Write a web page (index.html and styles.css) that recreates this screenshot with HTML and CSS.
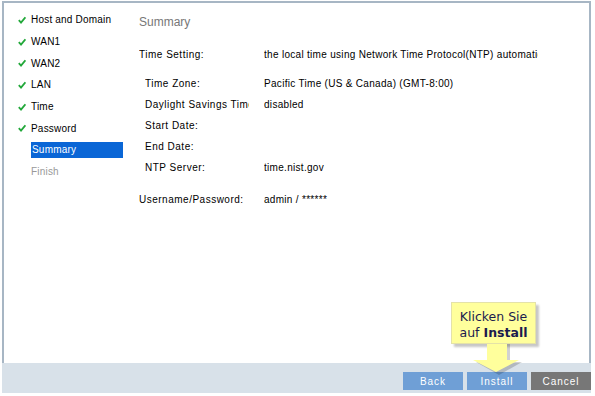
FILE: index.html
```html
<!DOCTYPE html>
<html lang="de">
<head>
    <meta charset="UTF-8">
    <link rel="stylesheet" href="styles.css">
</head>
<body>
    <div class="page">
        <div class="wizard">
            <ul class="steps">
                <li class="done"><svg viewBox="0 0 8 8"><path d="M0.8 4.2 L3 6.6 L7.4 1.2"/></svg>Host and Domain</li>
                <li class="done"><svg viewBox="0 0 8 8"><path d="M0.8 4.2 L3 6.6 L7.4 1.2"/></svg>WAN1</li>
                <li class="done"><svg viewBox="0 0 8 8"><path d="M0.8 4.2 L3 6.6 L7.4 1.2"/></svg>WAN2</li>
                <li class="done"><svg viewBox="0 0 8 8"><path d="M0.8 4.2 L3 6.6 L7.4 1.2"/></svg>LAN</li>
                <li class="done"><svg viewBox="0 0 8 8"><path d="M0.8 4.2 L3 6.6 L7.4 1.2"/></svg>Time</li>
                <li class="done"><svg viewBox="0 0 8 8"><path d="M0.8 4.2 L3 6.6 L7.4 1.2"/></svg>Password</li>
                <li class="current"><span>Summary</span></li>
                <li class="todo">Finish</li>
            </ul>
            <div class="content">
                <h2>Summary</h2>
                <div class="row">
                    <span class="label">Time Setting:</span>
                    <span class="value">the local time using Network Time Protocol(NTP) automatically</span>
                </div>
                <div class="group">
                    <div class="row sub">
                        <span class="label">Time Zone:</span>
                        <span class="value">Pacific Time (US &amp; Canada) (GMT-8:00)</span>
                    </div>
                    <div class="row sub">
                        <span class="label">Daylight Savings Time:</span>
                        <span class="value">disabled</span>
                    </div>
                    <div class="row sub">
                        <span class="label">Start Date:</span>
                        <span class="value"></span>
                    </div>
                    <div class="row sub">
                        <span class="label">End Date:</span>
                        <span class="value"></span>
                    </div>
                    <div class="row sub">
                        <span class="label">NTP Server:</span>
                        <span class="value">time.nist.gov</span>
                    </div>
                </div>
                <div class="row">
                    <span class="label">Username/Password:</span>
                    <span class="value">admin / ******</span>
                </div>
            </div>
        </div>
        <div class="footer">
            <button class="btn">Back</button>
            <button class="btn">Install</button>
            <button class="btn cancel">Cancel</button>
        </div>

        <div class="callout">
            <div class="tip-box">Klicken Sie<br>auf <b>Install</b></div>
            <svg class="tip-arrow" viewBox="0 0 52 32" width="52" height="32">
                <polygon class="shade" points="18,0 38,0 38,18 50,18 27,31 4,18 18,18"/>
                <polygon class="arrow" points="15,0 35,0 35,16 47,16 24,28 1,16 15,16"/>
            </svg>
        </div>
    </div>
</body>
</html>
```

FILE: styles.css
```css
body {
    margin: 0;
    background-color: #FFFFFF;
    font-family: "Liberation Sans", Arial, sans-serif;
    font-size: 10px;
    color: #000000;
}

.page {
    position: relative;
    width: 589px;
    margin: 1px 0 0 2px;
}

.wizard {
    display: flex;
    height: 362px;
    box-sizing: border-box;
    border: 2px solid #a7b6c4;
    border-bottom: none;
}

/* lista de pasos a la izquierda */
.steps {
    list-style: none;
    margin: 0;
    padding: 6px 0 0 14px;
    width: 135px;
    box-sizing: border-box;
    flex-shrink: 0;
}

.steps li {
    display: flex;
    align-items: center;
    height: 21.7px;
    letter-spacing: 0.2px;
}

.steps li svg {
    width: 8px;
    height: 8px;
    margin-right: 5px;
    flex-shrink: 0;
}

.steps li svg path {
    fill: none;
    stroke: #22a83a;
    stroke-width: 1.8;
}

.steps li.current,
.steps li.todo {
    padding-left: 13px;
}

.steps li.current span {
    display: block;
    width: 91px;
    height: 16px;
    line-height: 16px;
    padding-left: 1px;
    background-color: #0a66d6;
    color: #FFFFFF;
}

.steps li.todo {
    color: #999999;
}

.content {
    flex: 1;
    padding-top: 11px;
}

.content h2 {
    margin: 0 0 14px 0;
    font-size: 12px;
    font-weight: normal;
    line-height: 16px;
    color: #777777;
}

.row {
    display: flex;
    height: 21px;
    line-height: 21px;
    letter-spacing: 0.5px;
    white-space: nowrap;
}

.row .label {
    width: 125px;
    flex-shrink: 0;
    overflow: hidden;
}

.row .value {
    width: 274px;
    overflow: hidden;
    letter-spacing: 0.3px;
}

.row.sub {
    padding-left: 6px;
}

.row.sub .label {
    width: 104px;
    margin-right: 15px;
}

.group {
    margin: 8px 0 11px 0;
}

.footer {
    display: flex;
    justify-content: flex-end;
    align-items: flex-end;
    gap: 4px;
    height: 30px;
    box-sizing: border-box;
    padding-bottom: 3px;
    background-color: #d8e1e9;
}

.btn {
    width: 60px;
    height: 18px;
    padding: 0;
    border: none;
    background-color: #6f9fd6;
    color: #FFFFFF;
    font-family: "Liberation Sans", Arial, sans-serif;
    font-size: 10px;
    letter-spacing: 1px;
}

.btn.cancel {
    background-color: #777777;
}

/* burbuja de ayuda */
.callout {
    position: absolute;
    left: 449px;
    top: 301px;
    width: 92px;
    height: 74px;
}

.tip-box {
    width: 85px;
    height: 42px;
    box-sizing: border-box;
    padding-top: 6px;
    border: 1px solid #e4e2a8;
    background-color: #ffff9c;
    box-shadow: 3px 3px 2px rgba(0, 0, 0, 0.22);
    font-family: "DejaVu Sans", Verdana, sans-serif;
    font-size: 12.5px;
    line-height: 16px;
    text-align: center;
    color: #1b1b4e;
}

.tip-arrow {
    position: absolute;
    left: 21px;
    top: 42px;
}

.tip-arrow .arrow {
    fill: #ffff9c;
}

.tip-arrow .shade {
    fill: rgba(0, 0, 0, 0.18);
}
```
